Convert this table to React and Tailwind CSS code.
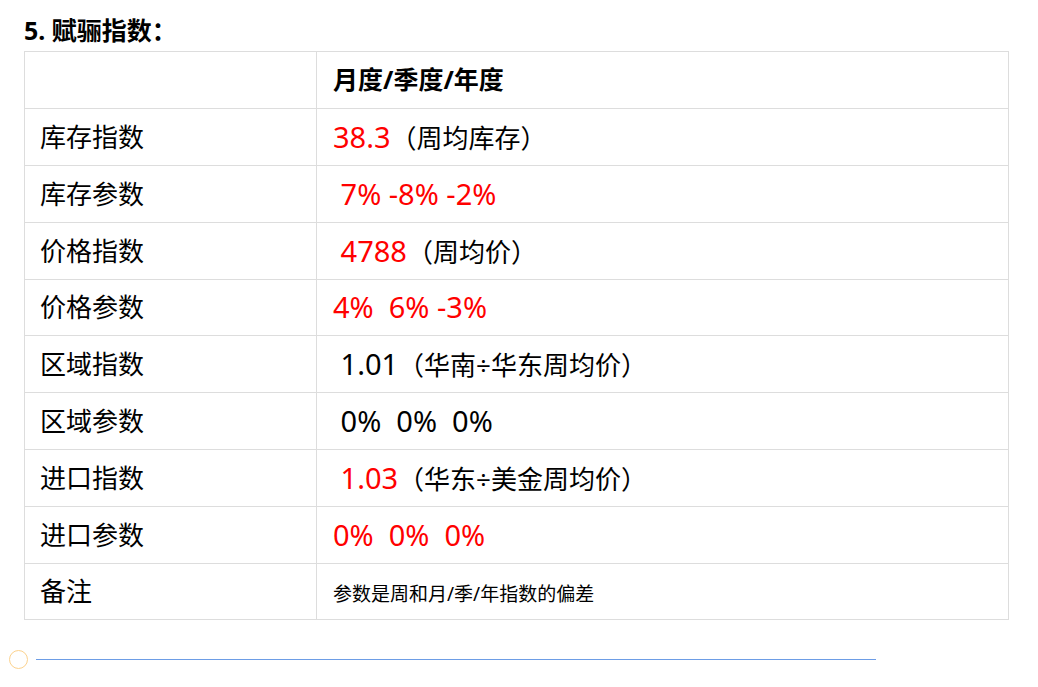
import React from "react";

const L = ({ children, red }) => (
  <span className={`text-[29px] ${red ? "text-[#ff0000]" : ""}`}>{children}</span>
);

const rows = [
  { label: "库存指数", h: "h-[57px]", content: <><L red>38.3</L><span>（周均库存）</span></> },
  { label: "库存参数", h: "h-[57px]", content: <L red>{" 7% -8% -2%"}</L> },
  { label: "价格指数", h: "h-[57px]", content: <><L red>{" 4788"}</L><span>（周均价）</span></> },
  { label: "价格参数", h: "h-[56px]", content: <L red>{"4%  6% -3%"}</L> },
  { label: "区域指数", h: "h-[57px]", content: <><L>{" 1.01"}</L><span>（华南÷华东周均价）</span></> },
  { label: "区域参数", h: "h-[57px]", content: <L>{" 0%  0%  0%"}</L> },
  { label: "进口指数", h: "h-[57px]", content: <><L red>{" 1.03"}</L><span>（华东÷美金周均价）</span></> },
  { label: "进口参数", h: "h-[57px]", content: <L red>{"0%  0%  0%"}</L> },
];

export default function App() {
  return (
    <div
      className="w-[1038px] h-[687px] bg-white text-black overflow-hidden"
      style={{ fontFamily: '"Noto Sans", "Noto Sans CJK SC", sans-serif' }}
    >
      <div className="pl-[24px] pt-[14px] h-[51px] text-[25px] leading-[33px] font-bold">
        5. 赋骊指数：
      </div>
      <div className="ml-[24px] w-[985px] border-t border-l border-r border-[#dddddd]">
        <div className="flex h-[57px] border-b border-[#dddddd]">
          <div className="w-[292px] border-r border-[#dddddd]" />
          <div className="flex-1 flex items-center pl-[16px] text-[25px] font-bold">
            月度/季度/年度
          </div>
        </div>
        {rows.map((r) => (
          <div key={r.label} className={`flex ${r.h} border-b border-[#dddddd] text-[26px]`}>
            <div className="w-[292px] border-r border-[#dddddd] flex items-center pl-[15px]">
              {r.label}
            </div>
            <div className="flex-1 flex items-center pl-[16px] whitespace-pre leading-[40px]">
              <div>{r.content}</div>
            </div>
          </div>
        ))}
        <div className="flex h-[56px] border-b border-[#dddddd]">
          <div className="w-[292px] border-r border-[#dddddd] flex items-center pl-[15px] text-[26px]">
            备注
          </div>
          <div className="flex-1 flex items-center pl-[16px] pt-[6px] text-[19px]">
            参数是周和月/季/年指数的偏差
          </div>
        </div>
      </div>
      <div className="flex items-center mt-[30px] pl-[9px] gap-[8px]">
        <div className="w-[19px] h-[19px] rounded-full border-[1.5px] border-[#fcd28e]" />
        <div className="w-[840px] h-px bg-[#6d9de6]" />
      </div>
    </div>
  );
}
